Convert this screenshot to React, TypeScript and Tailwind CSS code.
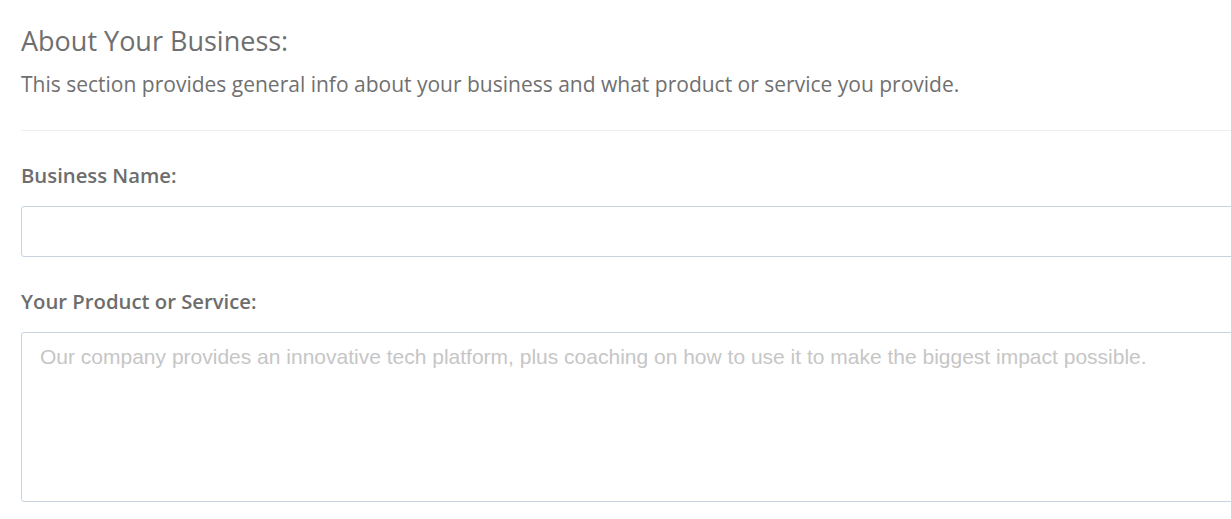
import React from "react";

export default function App() {
  return (
    <div className="w-full overflow-hidden bg-white min-h-[519px]" style={{ fontFamily: '"Open Sans", sans-serif' }}>
      <div className="ml-[21px] w-[1240px] pt-[23px]">
        <h2 className="text-[27px] font-normal leading-[36px] text-[#6f6f6f]">About Your Business:</h2>
        <p className="mt-[10px] text-[21px] leading-[30px] text-[#707070]">
          This section provides general info about your business and what product or service you provide.
        </p>
        <hr className="mt-[31px] border-0 border-t border-[#eeeeee]" />
        <label className="mt-[30px] block text-[20.3px] font-semibold leading-[28px] text-[#6d6d6d]">Business Name:</label>
        <input
          className="mt-[17px] block h-[51px] w-full rounded-[3px] border border-[#c7d3de] bg-white px-[18px] outline-none"
          type="text"
        />
        <label className="mt-[30px] block text-[20.3px] font-semibold leading-[28px] text-[#6d6d6d]">Your Product or Service:</label>
        <textarea
          className="mt-[17px] block h-[170px] w-full resize-none rounded-[3px] border border-[#c7d3de] bg-white px-[18px] pt-[11px] text-[21px] leading-[26px] text-[#555] outline-none placeholder:text-[#c6c6c6]"
          style={{ fontFamily: '"Liberation Sans", Arial, sans-serif' }}
          placeholder="Our company provides an innovative tech platform, plus coaching on how to use it to make the biggest impact possible."
        />
      </div>
    </div>
  );
}
